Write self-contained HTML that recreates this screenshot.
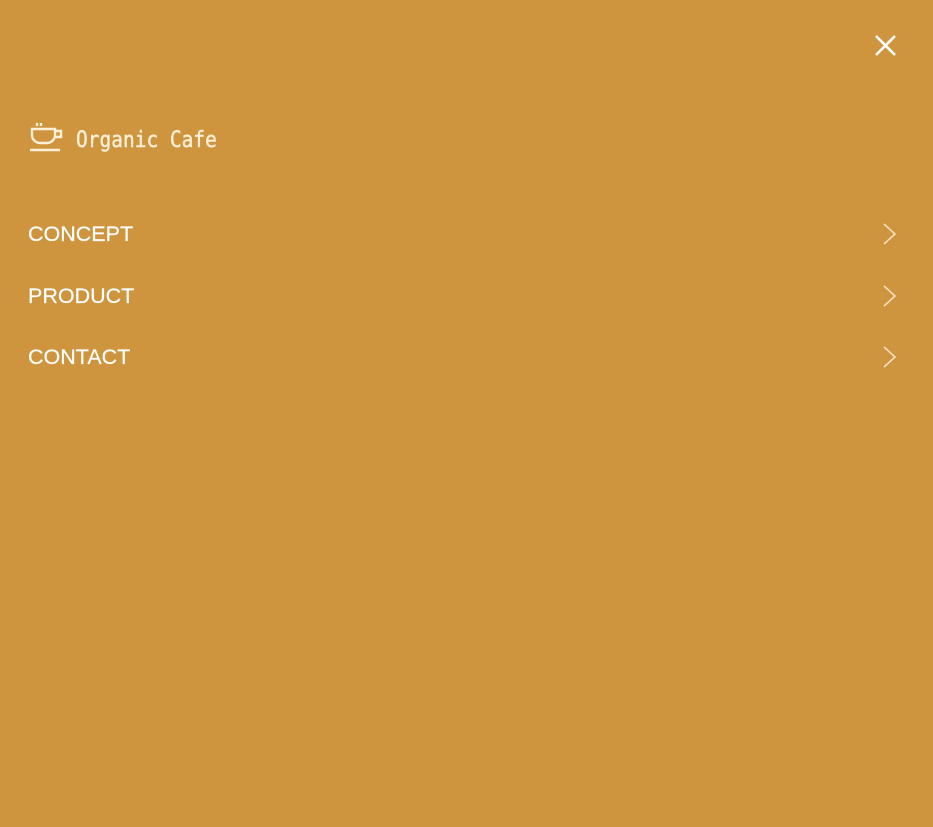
<!DOCTYPE html>
<html><head><meta charset="utf-8"><style>
html,body{margin:0;padding:0}
body{width:933px;height:827px;background:#ce943e;position:relative;overflow:hidden;font-family:"Liberation Sans",sans-serif}
.logo{position:absolute;left:76px;top:125px;font-family:"DejaVu Sans Mono","Liberation Mono",monospace;font-size:19.5px;color:#fbefd8;line-height:26px;transform:scaleY(1.15);transform-origin:left top;-webkit-text-stroke:0.4px #fbefd8}
.nav{position:absolute;left:28px;font-size:21.5px;color:#fff;line-height:24px;-webkit-text-stroke:0.2px #fff}
.chev{position:absolute;left:881px}
</style></head><body>
<svg style="position:absolute;left:874px;top:34px" width="23" height="23" viewBox="0 0 23 23"><path d="M2 2L21 21M21 2L2 21" stroke="#fff" stroke-width="2.6" fill="none"/></svg>
<svg style="position:absolute;left:28px;top:121px" width="36" height="32" viewBox="0 0 36 32"><g stroke="#fbefd8" stroke-width="2.4" fill="none"><path d="M9 2v3M13 2v3"/><path d="M4 8h23v6a8 8 0 0 1-8 8h-7a8 8 0 0 1-8-8z"/><path d="M27 10h6v6h-7"/><path d="M2 29h30"/></g></svg>
<div class="logo">Organic Cafe</div>
<div class="nav" style="top:222px">CONCEPT</div>
<div class="nav" style="top:284px">PRODUCT</div>
<div class="nav" style="top:345px">CONTACT</div>
<svg class="chev" style="top:223px" width="18" height="22" viewBox="0 0 18 22"><path d="M3 1l11 10-11 10" stroke="#f4e2c4" stroke-width="1.6" fill="none"/></svg>
<svg class="chev" style="top:285px" width="18" height="22" viewBox="0 0 18 22"><path d="M3 1l11 10-11 10" stroke="#f4e2c4" stroke-width="1.6" fill="none"/></svg>
<svg class="chev" style="top:346px" width="18" height="22" viewBox="0 0 18 22"><path d="M3 1l11 10-11 10" stroke="#f4e2c4" stroke-width="1.6" fill="none"/></svg>
</body></html>
